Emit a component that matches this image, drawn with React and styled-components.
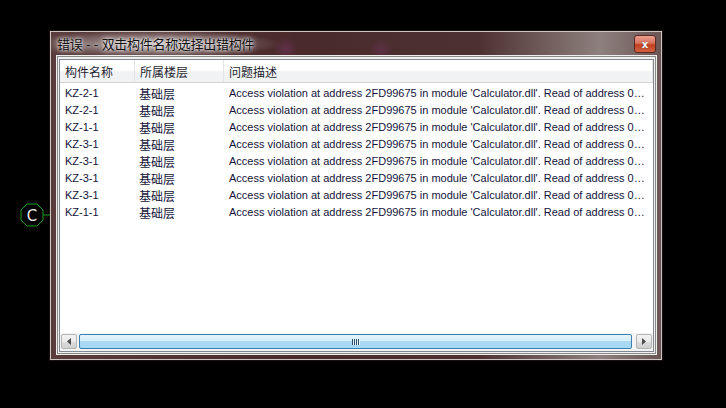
import React from "react";
import styled, { createGlobalStyle } from "styled-components";

const Global = createGlobalStyle`
  html, body { margin: 0; padding: 0; background: #000; }
  body { width: 726px; height: 408px; overflow: hidden; font-family: "Liberation Sans", "Noto Sans CJK SC", sans-serif; }
`;

const Desktop = styled.div`
  position: relative;
  width: 726px;
  height: 408px;
  background: #000;
  padding: 31px 0 0 50px;
  box-sizing: border-box;
`;

const Marker = styled.svg`
  position: absolute;
  left: 17px;
  top: 201px;
`;

const Window = styled.div`
  width: 612px;
  height: 329px;
  box-sizing: border-box;
  border: 1px solid #cdc4c3;
  background: linear-gradient(90deg, #5a3c3c 0%, #4a2a2b 40%, #4d3131 70%, #8d807e 90%, #6b5555 100%);
  display: flex;
  flex-direction: column;
  box-shadow: 0 0 0 1px #1a1010;
`;

const TitleBar = styled.div`
  height: 23px;
  display: flex;
  align-items: center;
  padding: 0 5px 0 6px;
  background:
    radial-gradient(ellipse 125px 14px at 105px 12px, rgba(215,208,208,0.8), rgba(215,208,208,0) 100%),
    radial-gradient(circle 12px at 235px 17px, rgba(130,55,120,0.4), rgba(130,55,120,0) 100%),
    radial-gradient(circle 12px at 330px 18px, rgba(130,55,120,0.3), rgba(130,55,120,0) 100%);
`;

const Title = styled.div`
  flex: 1;
  font-family: "Noto Sans CJK SC", sans-serif;
  font-size: 13px;
  letter-spacing: -0.3px;
  word-spacing: 1px;
  color: #111;
  text-shadow: 0 0 6px #fff, 0 0 3px #fff;
  line-height: 16px;
`;

const CloseBtn = styled.div`
  width: 20px;
  height: 16px;
  margin-top: 1px;
  border: 1px solid #5a2a22;
  border-radius: 3px;
  background: linear-gradient(180deg, #e9a090 0%, #d8705a 45%, #c2401f 55%, #d06040 100%);
  display: flex;
  align-items: center;
  justify-content: center;
  color: #fff;
  font-size: 10px;
  font-weight: bold;
  font-family: "DejaVu Sans", sans-serif;
  text-shadow: 0 0 1px #333;
`;

const Client = styled.div`
  flex: 1;
  margin: 0 4px 4px 5px;
  border: 1px solid #eeeeee;
  box-shadow: inset 0 0 0 1px #8a8a8a;
  background: #f0f0f0;
  padding: 3px 2px 2px 2px;
  display: flex;
`;

const List = styled.div`
  flex: 1;
  border: 1px solid #828790;
  background: #fff;
  display: flex;
  flex-direction: column;
  min-width: 0;
`;

const Header = styled.div`
  display: grid;
  grid-template-columns: 75px 89px 1fr;
  height: 22px;
  background: linear-gradient(180deg, #ffffff 0%, #ffffff 45%, #f1f2f4 55%, #f1f2f4 100%);
  border-bottom: 1px solid #d5d5d5;
`;

const HeadCell = styled.div`
  font-family: "Noto Sans CJK SC", sans-serif;
  font-size: 12px;
  color: #1e1e2e;
  padding-left: 5px;
  display: flex;
  align-items: center;
  border-right: 1px solid #e3e4e6;
`;

const Body = styled.div`
  flex: 1;
  padding-top: 2px;
`;

const Row = styled.div`
  display: grid;
  grid-template-columns: 75px 89px 1fr;
  height: 17px;
  align-items: center;
`;

const Cell = styled.div`
  font-family: ${p => (p.$cjk ? `"Noto Sans CJK SC", sans-serif` : `"Liberation Sans", sans-serif`)};
  font-size: ${p => (p.$cjk ? "12px" : "11px")};
  color: #14143a;
  padding-left: ${p => (p.$cjk ? "4px" : "5px")};
  padding-right: 3px;
  white-space: nowrap;
  overflow: hidden;
  text-overflow: ellipsis;
  line-height: 17px;
`;

const HScroll = styled.div`
  height: 17px;
  display: flex;
  align-items: center;
  gap: 1px;
  padding: 0 1px 1px 1px;
  background: #f4f4f4;
`;

const ArrowBtn = styled.div`
  width: 16px;
  height: 15px;
  box-sizing: border-box;
  border: 1px solid #b5b5b5;
  border-radius: 2px;
  background: linear-gradient(180deg, #f2f2f2 0%, #ebebeb 50%, #dddddd 51%, #cfcfcf 100%);
  display: flex;
  align-items: center;
  justify-content: center;
`;

const Thumb = styled.div`
  flex: 1;
  height: 15px;
  box-sizing: border-box;
  margin: 0 3px 0 1px;
  border: 1px solid #3c7fb1;
  border-radius: 2px;
  background: linear-gradient(180deg, #e3f4fc 0%, #d6eefb 45%, #a9dbf6 50%, #a5d8f4 100%);
  display: flex;
  align-items: center;
  justify-content: center;
`;

const Grip = styled.div`
  display: flex;
  gap: 1px;
  & > span {
    width: 1px;
    height: 6px;
    background: #2a4a68;
    box-shadow: 1px 0 0 #e8f6fd;
  }
`;

const rows = [
  ["KZ-2-1"], ["KZ-2-1"], ["KZ-1-1"], ["KZ-3-1"],
  ["KZ-3-1"], ["KZ-3-1"], ["KZ-3-1"], ["KZ-1-1"],
];

const msg = "Access violation at address 2FD99675 in module 'Calculator.dll'. Read of address 00000000.";

export default function App() {
  return (
    <>
      <Global />
      <Desktop>
        <Marker width="34" height="30" viewBox="0 0 34 30">
          <polygon points="10,3 20,3 26,9 26,19 20,25 10,25 4,19 4,9" fill="none" stroke="#1b9c1b" strokeWidth="1" />
          <line x1="26" y1="14" x2="33" y2="14" stroke="#1b9c1b" strokeWidth="1" />
          <text x="15" y="20" textAnchor="middle" fontSize="15" fill="#e8e8e8" fontFamily="DejaVu Sans, sans-serif">C</text>
        </Marker>
        <Window>
          <TitleBar>
            <Title>错误 - - 双击构件名称选择出错构件</Title>
            <CloseBtn>x</CloseBtn>
          </TitleBar>
          <Client>
            <List>
              <Header>
                <HeadCell>构件名称</HeadCell>
                <HeadCell>所属楼层</HeadCell>
                <HeadCell>问题描述</HeadCell>
              </Header>
              <Body>
                {rows.map((r, i) => (
                  <Row key={i}>
                    <Cell>{r[0]}</Cell>
                    <Cell $cjk>基础层</Cell>
                    <Cell>{msg}</Cell>
                  </Row>
                ))}
              </Body>
              <HScroll>
                <ArrowBtn>
                  <svg width="4" height="7" viewBox="0 0 4 7"><polygon points="4,0 0,3.5 4,7" fill="#4d4d4d" /></svg>
                </ArrowBtn>
                <Thumb>
                  <Grip><span /><span /><span /><span /></Grip>
                </Thumb>
                <ArrowBtn>
                  <svg width="4" height="7" viewBox="0 0 4 7"><polygon points="0,0 4,3.5 0,7" fill="#4d4d4d" /></svg>
                </ArrowBtn>
              </HScroll>
            </List>
          </Client>
        </Window>
      </Desktop>
    </>
  );
}
